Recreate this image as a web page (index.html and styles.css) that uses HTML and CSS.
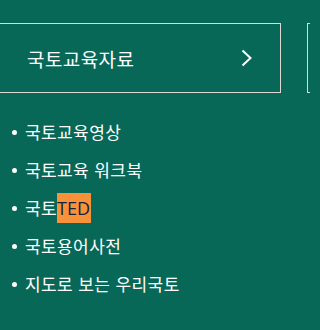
FILE: index.html
```html
<!DOCTYPE html>
<html lang="ko">
<head>
<meta charset="utf-8">
<link rel="stylesheet" href="styles.css">
</head>
<body>
<div class="page">
  <div class="tabs">
    <a class="tab" href="#">
      <span class="tab-title">국토교육자료</span>
      <svg class="chev" width="12" height="18" viewBox="0 0 12 18"><path d="M1.5 1.5 L9.5 9 L1.5 16.5" fill="none" stroke="#fff" stroke-width="2"/></svg>
    </a>
    <a class="tab" href="#"></a>
  </div>
  <ul class="list">
    <li>국토교육영상</li>
    <li>국토교육 워크북</li>
    <li>국토<span class="hl">TED</span></li>
    <li>국토용어사전</li>
    <li>지도로 보는 우리국토</li>
  </ul>
</div>
</body>
</html>
```
FILE: styles.css
```css
html, body {
  margin: 0;
  padding: 0;
  background: #086858;
}
body {
  font-family: "Noto Sans CJK KR", "Noto Sans", sans-serif;
  color: #fff;
  overflow: hidden;
  width: 310px;
  height: 330px;
}
.page {
  padding-top: 23px;
}
.tabs {
  display: flex;
  gap: 26px;
  margin-left: -20px;
}
.tab {
  flex: 0 0 auto;
  width: 301px;
  height: 70px;
  border: 1px solid #ddd8d0;
  display: flex;
  align-items: center;
  justify-content: space-between;
  padding: 0 27px 0 46px;
  box-sizing: border-box;
  text-decoration: none;
  color: #fff;
}
.tab-title {
  font-size: 19px;
  letter-spacing: 0.4px;
  line-height: 1;
}
.chev {
  display: block;
}
.list {
  list-style: none;
  margin: 20px 0 0 0;
  padding: 0 0 0 12px;
}
.list li {
  position: relative;
  font-size: 17px;
  line-height: 38px;
  padding-left: 13px;
  letter-spacing: 0.4px;
}
.list li::before {
  content: "";
  position: absolute;
  left: 0;
  top: 50%;
  width: 5px;
  height: 5px;
  margin-top: -2px;
  border-radius: 50%;
  background: #fff;
}
.hl {
  font-family: "Open Sans", "Noto Sans", sans-serif;
  font-size: 18px;
  background: #f7913a;
  color: #14213d;
  padding: 3px 1px 3px 0;
  letter-spacing: 0;
}
```
